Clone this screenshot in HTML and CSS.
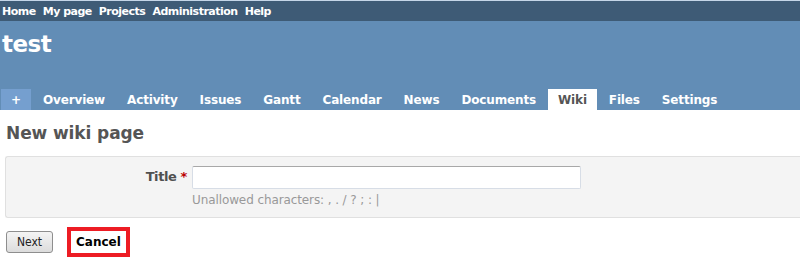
FILE: index.html
```html
<!DOCTYPE html>
<html lang="en">
<head>
    <meta charset="UTF-8">
    <title>New wiki page - test</title>
    <link rel="stylesheet" href="styles.css">
</head>
<body>
    <!-- Top menu -->
    <div class="top-menu">
        <a href="#">Home</a>
        <a href="#">My page</a>
        <a href="#">Projects</a>
        <a href="#">Administration</a>
        <a href="#">Help</a>
    </div>

    <!-- Project header -->
    <div class="header">
        <h1>test</h1>
        <ul class="tabs">
            <li><a class="new-object" href="#">+</a></li>
            <li><a href="#">Overview</a></li>
            <li><a href="#">Activity</a></li>
            <li><a href="#">Issues</a></li>
            <li><a href="#">Gantt</a></li>
            <li><a href="#">Calendar</a></li>
            <li><a href="#">News</a></li>
            <li><a href="#">Documents</a></li>
            <li><a class="selected" href="#">Wiki</a></li>
            <li><a href="#">Files</a></li>
            <li><a href="#">Settings</a></li>
        </ul>
    </div>

    <!-- Content -->
    <div class="content">
        <h2>New wiki page</h2>
        <div class="box">
            <div class="field">
                <label>Title <span class="required">*</span></label>
                <div class="field-input">
                    <input type="text">
                    <em class="info">Unallowed characters: , . / ? ; : |</em>
                </div>
            </div>
        </div>
        <div class="actions">
            <button class="btn">Next</button>
            <a class="cancel" href="#">Cancel</a>
        </div>
    </div>
</body>
</html>
```

FILE: styles.css
```css
/* Base */
body {
    margin: 0;
    font-family: "DejaVu Sans", Verdana, sans-serif;
    font-size: 12px;
    color: #333;
    background: #fff;
    overflow: hidden;
}

a {
    text-decoration: none;
}

/* Top menu */
.top-menu {
    background: #3e5b76;
    border-top: 1px solid #c5d6e8;
    height: 20px;
    display: flex;
    align-items: center;
    padding-left: 2px;
    gap: 7px;
}

.top-menu a {
    color: #fff;
    font-weight: bold;
    font-size: 11px;
    letter-spacing: -0.5px;
}

/* Header */
.header {
    background: #628db6;
    height: 89px;
    display: flex;
    flex-direction: column;
    justify-content: space-between;
}

.header h1 {
    margin: 0;
    padding: 10px 0 0 2px;
    color: #fff;
    font-size: 23px;
    font-weight: bold;
    letter-spacing: -0.5px;
}

.tabs {
    list-style: none;
    margin: 0;
    padding: 0 0 0 1px;
    display: flex;
    gap: 2px;
}

.tabs a {
    display: block;
    height: 21px;
    line-height: 23px;
    padding: 0 10px;
    color: #fff;
    font-weight: bold;
    font-size: 12px;
    letter-spacing: -0.15px;
}

.tabs a.new-object {
    background: #759fcf;
    width: 10px;
    text-align: center;
}

.tabs a.selected {
    background: #fff;
    color: #555;
}

/* Content */
.content {
    padding: 0 0 0 5px;
}

.content h2 {
    margin: 13px 0 13px 1px;
    color: #555;
    font-size: 17px;
    font-weight: bold;
    letter-spacing: -0.1px;
}

.box {
    background: #f4f4f4;
    border: 1px solid #e0e0e0;
    border-right: none;
    border-radius: 3px 0 0 3px;
    padding: 9px 0 10px 0;
}

.field {
    display: flex;
    gap: 5px;
}

.field label {
    width: 181px;
    text-align: right;
    font-weight: bold;
    font-size: 13px;
    letter-spacing: -0.4px;
    color: #505050;
    padding-top: 3px;
}

.required {
    color: #bb0000;
}

.field-input {
    display: flex;
    flex-direction: column;
}

.field-input input {
    width: 383px;
    height: 19px;
    margin: 0;
    border: 1px solid #d7dde6;
    border-top-color: #a8a8a8;
    border-radius: 2px;
    background: #fff;
    padding: 1px 2px;
}

.info {
    font-style: normal;
    font-size: 12px;
    letter-spacing: -0.1px;
    color: #999;
    margin-top: 4px;
}

/* Buttons */
.actions {
    display: flex;
    align-items: center;
    margin-top: 9px;
    gap: 14px;
}

.btn {
    width: 47px;
    height: 22px;
    margin-left: 1px;
    padding: 0;
    font-family: "DejaVu Sans Condensed", "DejaVu Sans", sans-serif;
    font-size: 12px;
    color: #222;
    background: linear-gradient(#f4f4f4, #dcdcdc);
    border: 1px solid #8e8e8e;
    border-radius: 3px;
}

.cancel {
    display: block;
    border: 4px solid #ed1c24;
    padding: 4px 5px;
    color: #000;
    font-weight: bold;
    font-size: 12px;
    line-height: 14px;
}
```
